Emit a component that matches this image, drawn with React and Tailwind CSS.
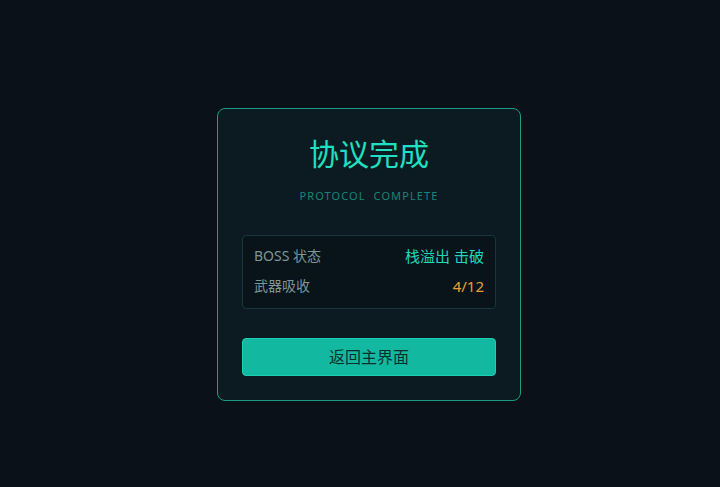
export default function App() {
  return (
    <div
      className="min-h-screen w-full bg-[#0a1118] flex items-center justify-center"
      style={{ fontFamily: '"Noto Sans", "Noto Sans CJK SC", sans-serif' }}
    >
      <div className="w-[304px] ml-[18px] mt-[22px] bg-[#0c1b21] border border-[#1a9d84] rounded-lg p-6 flex flex-col">
        <h1 className="text-center text-[30px] leading-[42px] text-[#1fe0c2]">
          协议完成
        </h1>
        <p className="mt-[13px] text-center text-[11px] leading-4 tracking-[0.1em] text-[#1a8578]">
          PROTOCOL&nbsp; COMPLETE
        </p>

        <div className="mt-[31px] border border-[#17363b] bg-[#08141a] rounded-[4px] px-[11px] pt-[10px] pb-[12px] flex flex-col gap-[10px] text-[14px] leading-5">
          <div className="flex items-center justify-between">
            <span className="text-[#7d969a]">BOSS 状态</span>
            <span className="text-[15px] text-[#1fd9bc]">栈溢出&nbsp;击破</span>
          </div>
          <div className="flex items-center justify-between">
            <span className="text-[#7d969a]">武器吸收</span>
            <span className="text-[15px] text-[#e3a133]">4/12</span>
          </div>
        </div>

        <button className="mt-[29px] h-[38px] w-full rounded-[4px] bg-[#12b9a0] border border-[#1ad0b4] text-[16px] text-[#0c2f2c]">
          返回主界面
        </button>
      </div>
    </div>
  );
}
